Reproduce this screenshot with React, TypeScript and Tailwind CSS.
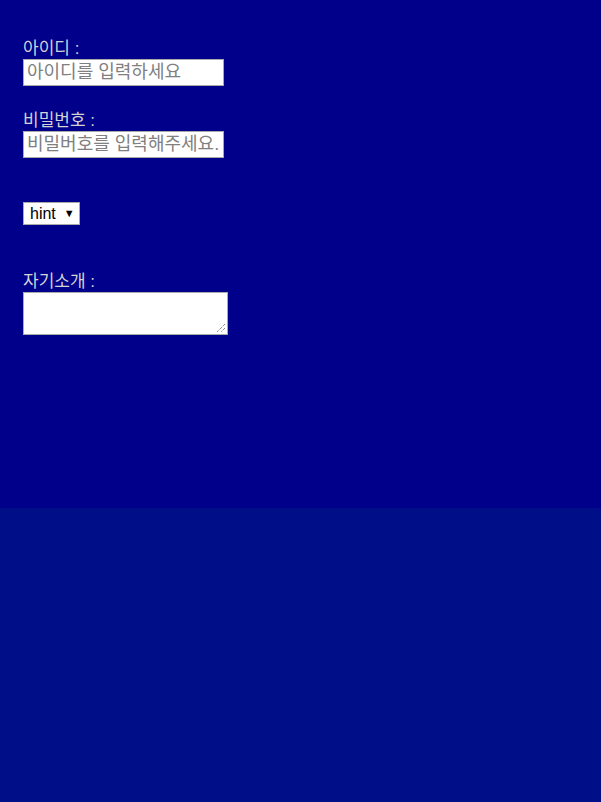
import React from "react";

export default function App() {
  return (
    <div className="min-h-screen bg-[#000f87]" style={{ fontFamily: '"Liberation Sans", "Noto Sans CJK KR", sans-serif' }}>
      <div className="h-[508px] bg-[#00008b] px-[23px] pt-[39px] text-[17px] text-[#d3d3d3]">
        <div className="leading-[20px]">아이디 :</div>
        <input
          className="block w-[201px] h-[27px] bg-white border border-[#a9a9a9] px-[3px] text-[18px] text-black placeholder:text-[#808080] outline-none"
          placeholder="아이디를 입력하세요"
        />
        <div className="mt-[25px] leading-[20px]">비밀번호 :</div>
        <input
          type="password"
          className="block w-[201px] h-[27px] bg-white border border-[#a9a9a9] px-[3px] text-[18px] text-black placeholder:text-[#808080] outline-none"
          placeholder="비밀버호를 입력해주세요."
        />
        <div className="mt-[44px] flex">
          <div className="flex items-center h-[23px] w-[57px] bg-white border border-[#a9a9a9] pl-[6px] text-[16px] text-black">
            <span>hint</span>
            <span className="ml-[8px] text-[11px]">▼</span>
          </div>
        </div>
        <div className="mt-[47px] leading-[20px]">자기소개 :</div>
        <div className="relative w-[205px] h-[43px] bg-white border border-[#a9a9a9]">
          <svg className="absolute right-[1px] bottom-[1px]" width="11" height="11" viewBox="0 0 11 11">
            <path d="M10 2 L2 10 M10 6 L6 10" stroke="#555" strokeWidth="1" strokeDasharray="1 1" />
          </svg>
        </div>
      </div>
    </div>
  );
}
